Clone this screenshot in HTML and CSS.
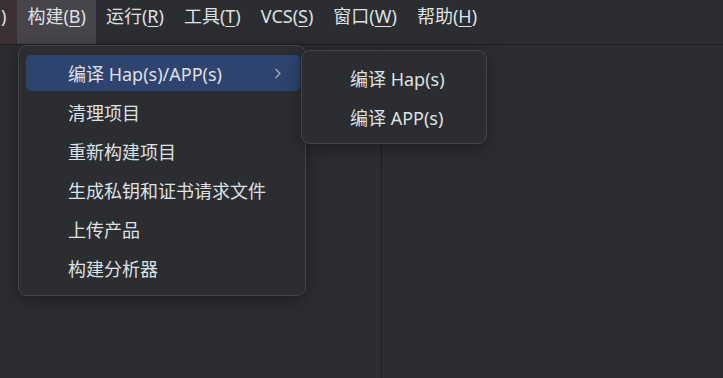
FILE: index.html
```html
<!DOCTYPE html>
<html lang="zh-CN">
<head>
    <meta charset="UTF-8">
    <meta name="viewport" content="width=device-width, initial-scale=1.0">
    <title>构建菜单</title>
    <link rel="stylesheet" href="styles.css">
</head>
<body>
    <div class="ide">
        <nav class="menubar">
            <span class="menu-title cut">)</span>
            <span class="menu-title active">构建(<u>B</u>)</span>
            <span class="menu-title">运行(<u>R</u>)</span>
            <span class="menu-title">工具(<u>T</u>)</span>
            <span class="menu-title">VCS(<u>S</u>)</span>
            <span class="menu-title">窗口(<u>W</u>)</span>
            <span class="menu-title">帮助(<u>H</u>)</span>
        </nav>
        <div class="workspace">
            <div class="pane-left"></div>
            <div class="pane-right"></div>
        </div>

        <div class="dropdown main-menu">
            <div class="menu-item selected">
                <span>编译 Hap(s)/APP(s)</span>
                <svg class="chevron" width="8" height="11" viewBox="0 0 8 11">
                    <path d="M1.5 1 L6 5.5 L1.5 10" fill="none" stroke="#a9acb2" stroke-width="1.3"/>
                </svg>
            </div>
            <div class="menu-item">清理项目</div>
            <div class="menu-item">重新构建项目</div>
            <div class="menu-item">生成私钥和证书请求文件</div>
            <div class="menu-item">上传产品</div>
            <div class="menu-item">构建分析器</div>
        </div>

        <div class="dropdown sub-menu">
            <div class="menu-item">编译 Hap(s)</div>
            <div class="menu-item">编译 APP(s)</div>
        </div>
    </div>
</body>
</html>
```

FILE: styles.css
```css
body{
    margin: 0;
    background-color: #2b2d30;
    font-family: "Noto Sans", "Noto Sans CJK SC", sans-serif;
    color: #dfe1e5;
    overflow: hidden;
}

.ide{
    position: relative;
    height: 378px;
    display: flex;
    flex-direction: column;
}

.menubar{
    display: flex;
    height: 44px;
    border-bottom: 1px solid #1e1f22;
    background-color: #2b2d30;
    font-size: 18px;
}

.menu-title{
    height: 44px;
    line-height: 32px;
    padding: 0 10px;
    white-space: nowrap;
}

.menu-title u{
    text-underline-offset: 3px;
    text-decoration-thickness: 1px;
}

.menu-title.cut{
    padding: 0 11px 0 1px;
    background-color: #3b3135;
}

.menu-title.active{
    background-color: #47444a;
}

.workspace{
    flex: 1;
    display: flex;
}

.pane-left{
    width: 381px;
    border-right: 1px solid #1e1f22;
}

.pane-right{
    flex: 1;
}

.dropdown{
    position: absolute;
    box-sizing: border-box;
    background-color: #2b2d30;
    border: 1px solid #43454a;
    border-radius: 9px;
    box-shadow: 0 4px 18px rgba(0, 0, 0, 0.35);
    font-size: 18px;
}

.main-menu{
    left: 18px;
    top: 45px;
    width: 288px;
    padding: 9px 5px 9px 7px;
}

.sub-menu{
    left: 301px;
    top: 50px;
    width: 186px;
    padding: 9px 6px 8px 6px;
}

.menu-item{
    display: flex;
    align-items: center;
    height: 36px;
    padding: 0 18px 0 42px;
    border-radius: 5px;
    white-space: nowrap;
}

.menu-item + .menu-item{
    margin-top: 3px;
}

.menu-item.selected{
    background-color: #2e436e;
}

.chevron{
    margin-left: auto;
}
```
